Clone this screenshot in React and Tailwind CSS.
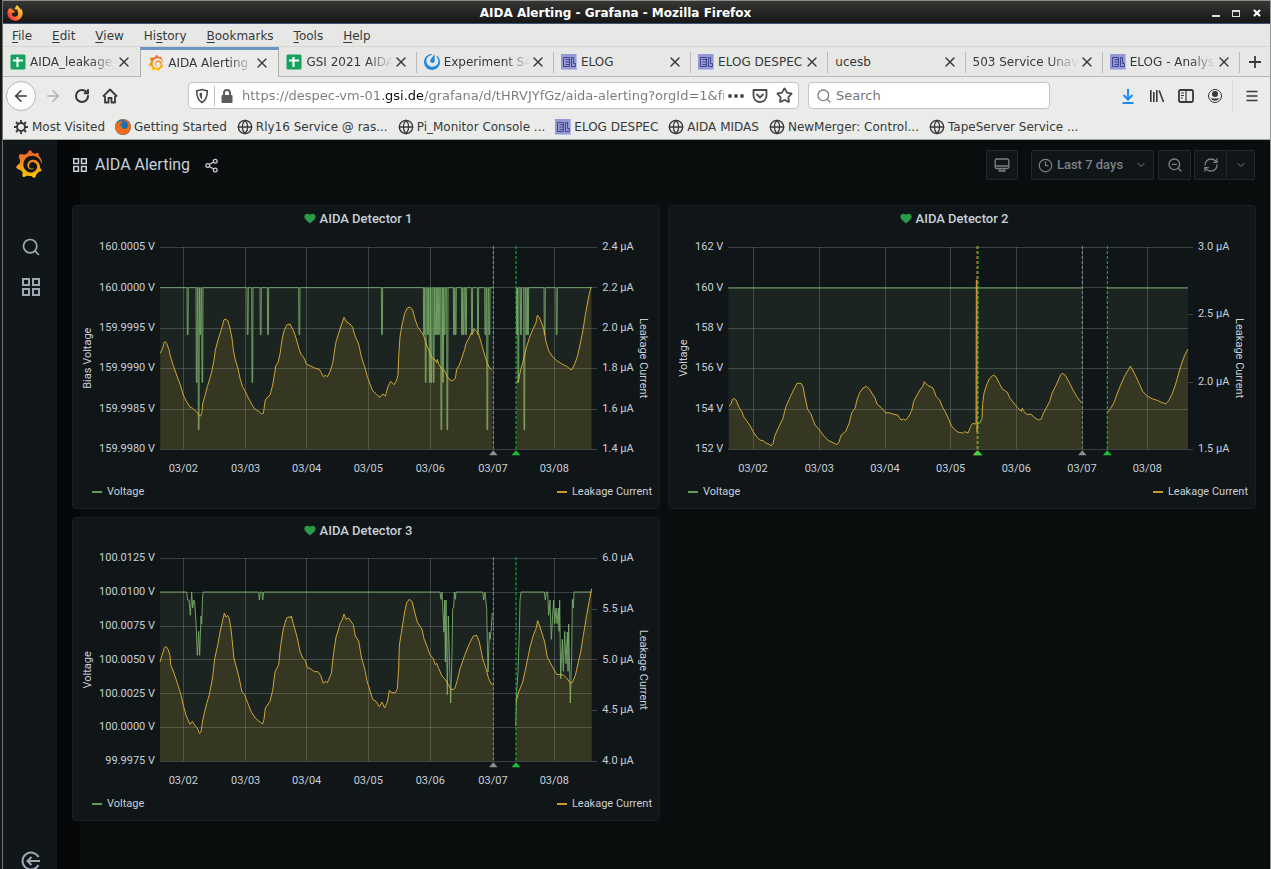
import React from "react";
import {
    ArrowLeft,
    ArrowRight,
    ChevronDown,
    Clock3,
    Globe,
    RefreshCw,
    RotateCw,
    Search,
    Share2,
    Star,
    X,
    ZoomOut,
} from "lucide-react";
import { FaFirefoxBrowser, FaFirefox } from "react-icons/fa";
import { SiGrafana, SiMattermost } from "react-icons/si";

// Traces are stored at three units per pixel
const UNIT = 3;

const shift = (dx, text) =>
    text
        .trim()
        .split(/\s+/)
        .map((pair) => {
            const [x, y] = pair.split(",").map(Number);
            return [x + dx, y];
        });

const spikes = (base, start, end, list) => {
    const points = [[start, base]];
    list.forEach(([x, y]) => points.push([x - 2, base], [x - 1, y], [x + 1, y], [x + 2, base]));
    points.push([end, base]);
    return points;
};

const LOW = 404;
const MID = 547;
const DEEP = 689;

const detector1 = {
    title: "AIDA Detector 1",
    inset: 2,
    plot: { left: 270, right: 1567, top: 141, bottom: 748 },
    leftTitle: "Bias Voltage",
    leftTicks: [
        [141, "160.0005 V"],
        [263, "160.0000 V"],
        [384, "159.9995 V"],
        [505, "159.9990 V"],
        [627, "159.9985 V"],
        [748, "159.9980 V"],
    ],
    rightTicks: [
        [141, "2.4 µA"],
        [263, "2.2 µA"],
        [384, "2.0 µA"],
        [505, "1.8 µA"],
        [627, "1.6 µA"],
        [748, "1.4 µA"],
    ],
    days: [340, 527, 710, 895, 1081, 1269, 1453],
    voltage: [
        spikes(263, 270, 1267, [
            [353, LOW], [380, MID], [386, DEEP], [391, LOW], [397, MID], [533, LOW], [547, MID], [572, LOW],
            [594, LOW], [688, LOW], [936, LOW], [1062, LOW], [1067, MID], [1074, LOW], [1079, MID], [1084, MID],
            [1091, MID], [1096, LOW], [1101, LOW], [1107, LOW], [1114, DEEP], [1119, MID], [1124, LOW],
            [1132, DEEP], [1152, LOW], [1157, LOW], [1176, LOW], [1181, LOW], [1188, LOW], [1206, LOW],
            [1224, LOW], [1246, LOW], [1252, DEEP], [1258, LOW],
        ]),
        spikes(263, 1338, 1565, [
            [1341, LOW], [1345, MID], [1353, LOW], [1363, DEEP], [1369, LOW], [1374, LOW], [1424, LOW], [1460, LOW],
        ]),
    ],
    current: [
        [
            ...shift(0, `271,460 278,445 282,428 286,425 290,430 298,452 300,465 310,497 320,525 330,552 340,585 350,605
                360,621 368,625 378,634 384,640 388,648 392,648 396,635 398,612 404,590 412,560 424,520 432,480 436,450
                444,420 452,395 458,375 462,359 468,358 474,363 480,385 486,415 490,450 496,480 504,505 510,535 518,560
                526,575 534,592 544,610 552,624 560,631 568,635 575,642 580,640 586,600 592,592 600,585 608,555 614,520
                617,498 624,488 630,462 636,420 642,393 650,375 660,372 666,384 672,396 680,420 688,450 694,464 702,474
                710,493 720,497 734,504 748,508 754,518 760,530 766,526 772,530 780,515 788,490 794,450 798,425 806,400
                814,375 822,352 830,366 840,372 848,382 854,405 866,432 874,470 884,500 892,530`),
            ...shift(900, `0,552 8,572 20,584 30,592 38,582 46,588 54,560 62,544 72,554 80,540 84,525 86,470 90,410 96,375
                104,340 112,324 120,321 128,330 136,360 144,382 156,398 162,410 170,435 180,460 188,476 196,480 200,488
                202,478 206,492 214,505 224,512 232,530 240,540 248,542 256,535 260,508 268,495 276,472 284,448 288,430
                298,412 304,398 308,400 312,386 320,395 326,402 334,430 344,465 352,490 360,505 367,510`),
        ],
        shift(900, `440,550 446,538 452,510 460,480 470,440 480,408 490,385 498,368 502,346 508,352 516,372 522,390
            528,425 536,452 546,468 560,482 576,492 592,500 600,508 606,508 614,492 622,470 630,435 638,395 646,345
            654,300 660,272 664,261`),
    ],
    marks: [[1270, "#8e8e8e"], [1338, "#12c435"]],
};

const detector2 = {
    title: "AIDA Detector 2",
    inset: 3,
    plot: { left: 190, right: 1569, top: 141, bottom: 748 },
    leftTitle: "Voltage",
    leftTicks: [
        [141, "162 V"],
        [263, "160 V"],
        [384, "158 V"],
        [505, "156 V"],
        [627, "154 V"],
        [748, "152 V"],
    ],
    rightTicks: [
        [141, "3.0 µA"],
        [343, "2.5 µA"],
        [546, "2.0 µA"],
        [748, "1.5 µA"],
    ],
    days: [264, 463, 660, 857, 1054, 1251, 1447],
    voltage: [
        [[190, 264], [1250, 264]],
        [[1325, 264], [1569, 264]],
    ],
    current: [
        [
            ...shift(0, `192,618 198,612 202,598 208,595 214,602 222,622 230,634 236,650 246,664 256,678 264,694 274,709
                284,720 294,722 304,730 312,732 318,738 324,730 330,706 340,684 354,655 362,622 376,590 388,565 396,550
                408,550 414,560 420,592 428,628 438,642 450,675 464,690 474,705 488,720 504,728 516,734 522,726 528,706
                542,694 553,668 560,638 570,625 576,600 584,578 594,564 604,559 614,568 622,582 630,594 636,612 650,624
                662,638 676,639 686,643 698,645 708,660 716,657 722,661 732,648 740,632 746,605 756,585 766,568 774,558
                778,545 788,556 804,564 814,590 824,600 832,620 842,638 850,655 858,675 868,688 880,697`),
            ...shift(885, `0,697 8,700 14,695 24,699 32,680 38,670 46,672 48,672 49,240 51,240 51,695 53,672 60,668 66,655
                68,610 72,580 80,555 88,536 100,525 108,530 118,550 126,566 142,577 150,595 164,612 172,622 184,634
                187,625 190,632 200,643 214,643 222,652 236,660 244,657 250,640 262,618 270,602 276,580 290,552 302,524
                308,520 316,526 326,544 340,572 352,592 364,608`),
        ],
        shift(885, `442,638 452,625 462,608 472,580 482,555 494,528 506,508 511,498 518,510 528,530 540,556 548,574
            560,587 576,596 592,601 606,608 618,611 626,602 636,583 646,555 656,520 664,493 674,466 684,447`),
    ],
    marks: [[936, "#e0752d"], [939, "#2fdc3f"], [1252, "#8e8e8e"], [1327, "#12c435"]],
};

const detector3 = {
    title: "AIDA Detector 3",
    inset: 2,
    plot: { left: 270, right: 1567, top: 139, bottom: 748 },
    leftTitle: "Voltage",
    leftTicks: [
        [139, "100.0125 V"],
        [240, "100.0100 V"],
        [342, "100.0075 V"],
        [443, "100.0050 V"],
        [545, "100.0025 V"],
        [646, "100.0000 V"],
        [748, "99.9975 V"],
    ],
    rightTicks: [
        [139, "6.0 µA"],
        [291, "5.5 µA"],
        [443, "5.0 µA"],
        [595, "4.5 µA"],
        [748, "4.0 µA"],
    ],
    days: [340, 527, 710, 895, 1081, 1269, 1453],
    voltage: [
        [
            ...shift(0, `270,240 350,240 353,264 357,264 361,310 365,240 368,288 371,264 374,270 378,330 382,430 386,358
                389,430 393,312 395,335 398,250 400,240 566,240 568,264 571,240 576,240 578,264 581,240`),
            ...shift(900, `210,240 213,262 216,240 222,360 224,264 226,450 228,264 232,548 235,312 238,420 242,573 246,420
                248,290 251,288 253,240 256,262 258,240 338,240 341,264 345,240 350,290 354,480 358,360 360,382 363,358
                367,302`),
        ],
        shift(900, `437,642 440,540 444,478 448,360 450,264 453,240 523,240 526,264 529,240 533,240 536,310 540,264
            544,382 548,310 551,264 554,335 558,288 561,335 565,288 567,358 569,264 572,500 577,382 580,478 584,358
            588,455 592,360 594,478 596,336 601,573 605,430 607,262 610,288 612,240 665,240`),
    ],
    current: [
        [
            ...shift(0, `270,450 276,430 283,407 289,404 294,412 300,430 302,458 312,483 322,513 332,545 340,580 348,610
                360,637 367,628 376,642 382,648 388,664 393,660 398,625 410,575 418,548 428,495 434,440 444,395 450,360
                458,325 463,303 468,315 473,310 478,320 484,360 492,440 500,468 508,500 516,540 524,548 534,575 544,600
                556,618 566,627 578,636 582,622 586,588 600,568 608,535 615,480 626,458 632,400 640,350 650,318 656,314
                660,318 664,312 670,335 682,378 690,418 698,438 706,445 712,467 722,470 732,479 744,479 752,490 760,514
                765,508 772,512 784,485 790,430 798,375 804,357 810,335 817,322 822,306 828,322 836,318 844,330 850,338
                856,372 866,387 874,435 884,470 892,510`),
            ...shift(900, `0,535 8,562 18,568 28,584 36,570 44,588 52,570 58,535 66,542 76,542 82,530 86,470 88,400 96,350
                104,300 110,272 118,262 126,268 134,300 142,330 156,352 162,380 172,405 180,428 190,440 196,458 200,454
                206,469 216,492 228,505 236,520 246,534 254,530 262,505 270,470 284,430 298,395 310,372 320,370 328,390
                338,440 348,470 356,500 364,516 369,517`),
        ],
        shift(900, `438,570 446,540 458,510 468,465 480,405 490,370 498,350 503,326 510,345 518,370 524,390 532,435
            546,462 560,487 580,489 590,498 602,514 608,510 616,490 624,455 632,420 640,370 650,310 658,265 665,230`),
    ],
    marks: [[1270, "#8e8e8e"], [1338, "#12c435"]],
};

const toLine = (points) => "M" + points.map((p) => p.join(" ")).join("L");

const toArea = (points, bottom) =>
    `${toLine(points)}L${points[points.length - 1][0]} ${bottom}L${points[0][0]} ${bottom}Z`;

const Series = ({ runs, bottom, color, fillOpacity, lineOpacity }) =>
    runs.map((points, i) => (
        <g key={i}>
            <path d={toArea(points, bottom)} fill={color} fillOpacity={fillOpacity} />
            <path
                d={toLine(points)}
                fill="none"
                stroke={color}
                strokeOpacity={lineOpacity}
                strokeLinejoin="round"
                vectorEffect="non-scaling-stroke"
            />
        </g>
    ));

const Chart = ({ inset, plot, leftTitle, leftTicks, rightTicks, days, voltage, current, marks }) => {
    const px = (x) => x / UNIT - inset;
    const py = (y) => y / UNIT - 5;
    const middle = py((plot.top + plot.bottom) / 2);

    return (
        <svg viewBox="1 28 586 245" className="block w-full h-auto font-[Roboto,sans-serif] text-[11px]" fill="#c7d0d9">
            <g transform={`translate(${-inset} -5) scale(${1 / UNIT})`}>
                <g stroke="#e6f0f5" strokeOpacity="0.2" shapeRendering="crispEdges">
                    {leftTicks.map(([y]) => (
                        <path key={y} d={`M${plot.left} ${y}H${plot.right}`} vectorEffect="non-scaling-stroke" />
                    ))}
                    {rightTicks.map(([y]) => (
                        <path key={y} d={`M${plot.right} ${y}h15`} vectorEffect="non-scaling-stroke" />
                    ))}
                    {days.map((x) => (
                        <path key={x} d={`M${x} ${plot.top}V${plot.bottom}`} vectorEffect="non-scaling-stroke" />
                    ))}
                </g>
                <Series runs={voltage} bottom={plot.bottom} color="#7eb26d" fillOpacity="0.1" lineOpacity="0.85" />
                <Series runs={current} bottom={plot.bottom} color="#eab839" fillOpacity="0.13" lineOpacity="0.85" />
                {marks.map(([x, color]) => (
                    <g key={x}>
                        <path
                            d={`M${x} ${plot.top - 3}V${plot.bottom}`}
                            stroke={color}
                            strokeDasharray="3 2"
                            vectorEffect="non-scaling-stroke"
                        />
                        <path d={`M${x} 751l13 15h-26z`} fill={color} />
                    </g>
                ))}
            </g>
            {leftTicks.map(([y, label]) => (
                <text key={label} x={px(plot.left) - 5} y={py(y) + 3} textAnchor="end">{label}</text>
            ))}
            {rightTicks.map(([y, label]) => (
                <text key={label} x={px(plot.right) + 10} y={py(y) + 3}>{label}</text>
            ))}
            {days.map((x, i) => (
                <text key={x} x={px(x)} y="267" textAnchor="middle">{`03/0${i + 2}`}</text>
            ))}
            <text transform={`translate(19 ${middle + 10}) rotate(-90)`} textAnchor="middle">{leftTitle}</text>
            <text transform={`translate(568 ${middle + 10}) rotate(90)`} textAnchor="middle">Leakage Current</text>
        </svg>
    );
};

const Panel = ({ data }) => (
    <section className="bg-[#101518] border border-[#1c1d22] rounded-sm font-[Roboto,sans-serif] text-[#c7d0d9]">
        <h2 className="h-[27px] pr-4 pb-0.5 flex items-center justify-center gap-1 text-[13px] font-medium">
            <svg viewBox="0 0 12 11" className="w-3 h-[11px]" fill="#299c46">
                <path d="M6 10.5 1.3 6.2C-.3 4.5.2 1.6 2.2.9 3.7.4 5.2.8 6 2 6.8.8 8.3.4 9.8.9c2 .7 2.5 3.6.9 5.3z" />
            </svg>
            {data.title}
        </h2>
        <Chart {...data} />
        <div className="h-[30px] pl-[19px] pr-[7px] pb-0.5 flex items-center justify-between text-[11px]">
            <button className="flex items-center gap-[5px]">
                <span className="w-[10px] h-[2px] bg-[#629e51]" />
                Voltage
            </button>
            <button className="flex items-center gap-[5px]">
                <span className="w-[10px] h-[2px] bg-[#c99b2a]" />
                Leakage Current
            </button>
        </div>
    </section>
);

const SheetIcon = () => (
    <svg viewBox="0 0 16 16" className="w-4 h-4 shrink-0">
        <rect x="0.5" y="0.5" width="15" height="15" rx="1.5" fill="#16a15f" />
        <path d="M3 6.500h10M7.500 3v10" stroke="#fff" strokeWidth="2" />
    </svg>
);

const ElogIcon = () => (
    <svg viewBox="0 0 16 16" className="w-4 h-4 shrink-0">
        <rect width="16" height="16" fill="#9499d2" />
        <path d="M0 15.500h16M15.500 0v16" stroke="#b9bdea" />
        <path d="M2.500 3.500h6v9h-6zM4.500 5.500H8M4.500 8H8M4.500 10.500H8M10.500 3.500h2v6h2v3h-4z" fill="none" stroke="#434894" />
    </svg>
);

const GrafanaIcon = ({ className }) => (
    <>
        <svg className="w-0 h-0 absolute">
            <defs>
                <linearGradient id="grafana" x1="0" y1="0" x2="0" y2="1">
                    <stop offset="0" stopColor="#f05a28" />
                    <stop offset="1" stopColor="#fbca0a" />
                </linearGradient>
                <linearGradient id="fox" x1="1" y1="0" x2="0" y2="1">
                    <stop offset="0.1" stopColor="#ffe14a" />
                    <stop offset="0.5" stopColor="#ff8a1e" />
                    <stop offset="0.9" stopColor="#f0245e" />
                </linearGradient>
            </defs>
        </svg>
        <SiGrafana className={className} style={{ fill: "url(#grafana)" }} />
    </>
);

const GridIcon = ({ className }) => (
    <svg viewBox="0 0 18 18" className={className} fill="none" stroke="currentColor" strokeWidth="2">
        <path d="M1 1h6v6H1zM11 1h6v6h-6zM1 11h6v6H1zM11 11h6v6h-6z" />
    </svg>
);

const GearIcon = () => (
    <svg viewBox="0 0 16 16" className="w-4 h-4 shrink-0" fill="none" stroke="currentColor">
        <circle cx="8" cy="8" r="4" strokeWidth="2" />
        <path
            d="M8 1v2.500M8 12.500V15M1 8h2.500M12.500 8H15M3 3l2 2M11 11l2 2M13 3l-2 2M5 11l-2 2"
            strokeWidth="1.8"
        />
    </svg>
);

const menus = ["File", "Edit", "View", "History", "Bookmarks", "Tools", "Help"];
const menuKeys = [0, 0, 0, 2, 0, 0, 0];

const tabs = [
    { label: "AIDA_leakage_", icon: <SheetIcon />, fade: true },
    { label: "AIDA Alerting", icon: <GrafanaIcon className="w-4 h-4 shrink-0" />, fade: true, active: true },
    { label: "GSI 2021 AIDA", icon: <SheetIcon />, fade: true },
    { label: "Experiment S4", icon: <SiMattermost className="w-4 h-4 shrink-0 text-[#2389d7]" />, fade: true },
    { label: "ELOG", icon: <ElogIcon /> },
    { label: "ELOG DESPEC", icon: <ElogIcon /> },
    { label: "ucesb" },
    { label: "503 Service Unava", fade: true },
    { label: "ELOG - Analys", icon: <ElogIcon />, fade: true },
];

const globe = <Globe className="w-4 h-4 shrink-0" />;

const bookmarks = [
    { label: "Most Visited", icon: <GearIcon /> },
    {
        label: "Getting Started",
        icon: (
            <span className="w-4 h-4 shrink-0 rounded-full bg-[#1c6fb5] grid place-items-center">
                <FaFirefox className="w-4 h-4 text-[#ef6c1a]" />
            </span>
        ),
    },
    { label: "Rly16 Service @ ras...", icon: globe },
    { label: "Pi_Monitor Console ...", icon: globe },
    { label: "ELOG DESPEC", icon: <ElogIcon /> },
    { label: "AIDA MIDAS", icon: globe },
    { label: "NewMerger: Control...", icon: globe },
    { label: "TapeServer Service ...", icon: globe },
];

const Browser = () => (
    <header className="font-['DejaVu_Sans',sans-serif] text-xs text-[#36393a]">
        {/* Title bar */}
        <div className="h-6 pt-0.5 flex items-center border-t border-[#8c8f8a] border-b border-b-[#3d5678] bg-linear-to-b from-[#373735] to-[#151615] text-white">
            <FaFirefoxBrowser className="w-4 h-4 ml-1 shrink-0" style={{ fill: "url(#fox)" }} />
            <div className="flex-1 pr-1 text-center font-bold">AIDA Alerting - Grafana - Mozilla Firefox</div>
            <div className="flex items-center gap-3 pr-2">
                <button aria-label="Minimize" className="w-2 h-2 border-b-2 border-[#dcdcdc]" />
                <button aria-label="Maximize" className="w-2 h-[7px] border border-t-2 border-[#dcdcdc]" />
                <button aria-label="Close"><X className="w-[10px] h-[10px]" strokeWidth={5} /></button>
            </div>
        </div>

        {/* Menu */}
        <nav className="h-[23px] px-[9px] pt-0.5 flex items-center gap-5 bg-[#e7e8e6] border-b border-[#d6d7d5]">
            {menus.map((menu, i) => (
                <button key={menu}>
                    {menu.slice(0, menuKeys[i])}
                    <u className="underline-offset-2">{menu[menuKeys[i]]}</u>
                    {menu.slice(menuKeys[i] + 1)}
                </button>
            ))}
        </nav>

        {/* Tabs */}
        <div className="h-[30px] flex bg-[#e7e8e6]">
            {tabs.map((tab, i) => (
                <div
                    key={i}
                    className={
                        tab.active
                            ? "flex-1 min-w-0 flex items-center gap-1 pl-[7px] pr-2 border-t-3 border-x border-t-[#6a94c2] border-x-[#a9adab] bg-[#ebecea] pb-0.5"
                            : "relative flex-1 min-w-0 flex items-center gap-1 pl-[7px] pr-2 border-b border-[#b4b7b4]"
                    }
                >
                    {tab.icon}
                    <button
                        className={
                            tab.fade
                                ? "flex-1 min-w-0 overflow-hidden whitespace-nowrap text-left [mask-image:linear-gradient(to_right,black_70%,transparent)]"
                                : "flex-1 min-w-0 whitespace-nowrap text-left"
                        }
                    >
                        {tab.label}
                    </button>
                    <button aria-label="Close tab" className="-ml-1"><X className="w-4 h-4" strokeWidth={2} /></button>
                    {i > 1 && <span className="absolute right-0 top-[5px] h-[21px] w-px bg-[#b9bcba]" />}
                </div>
            ))}
            <button aria-label="New tab" className="w-[30px] grid place-items-center border-b border-[#b4b7b4]">
                <svg viewBox="0 0 14 14" className="w-[14px] h-[14px]" stroke="currentColor" strokeWidth="1.8">
                    <path d="M7 1v12M1 7h12" />
                </svg>
            </button>
        </div>

        {/* Address bar */}
        <div className="h-[37px] flex items-center bg-[#ebecea] text-[13px]">
            <div className="w-[185px] pl-[3px] flex items-center gap-3">
                <button aria-label="Back" className="w-[30px] h-[30px] rounded-full border border-[#b4b6b4] bg-[#fcfcfc] grid place-items-center">
                    <ArrowLeft className="w-[18px] h-[18px]" />
                </button>
                <button aria-label="Forward" className="-ml-1"><ArrowRight className="w-[18px] h-[18px] text-[#b1b3b3]" /></button>
                <button aria-label="Reload"><RotateCw className="w-4 h-4" strokeWidth={3} /></button>
                <button aria-label="Home">
                    <svg viewBox="0 0 16 16" className="w-4 h-4" fill="none" stroke="currentColor" strokeWidth="1.8" strokeLinejoin="round">
                        <path d="M1 8.500 8 1.500l7 7M3 8v6.500h3.500V10h3v4.500H13V8" />
                    </svg>
                </button>
            </div>
            <div className="flex-1 min-w-0 h-[27px] px-[5px] flex items-center bg-white border border-[#c3c5c3] rounded-sm">
                <svg viewBox="0 0 16 16" className="w-4 h-4 shrink-0" fill="none" stroke="#4b4f50" strokeWidth="1.6">
                    <path d="M8 1.500c2 .8 3.500 1 5.300 1.200 0 5.300-.8 9.300-5.300 11.800-4.500-2.500-5.300-6.500-5.300-11.800C4.500 2.500 6 2.300 8 1.500z" />
                    <path d="M8 4.500v7C5.800 9.500 5.500 7.500 5.500 5.200z" fill="#4b4f50" stroke="none" />
                </svg>
                <span className="w-px h-5 mx-1 bg-[#bfc1bf]" />
                <svg viewBox="0 0 16 16" className="w-4 h-4 shrink-0" fill="#5a5c5d">
                    <rect x="2.5" y="7" width="11" height="8" rx="1" />
                    <path d="M5 7V5a3 3 0 0 1 6 0v2" fill="none" stroke="#5a5c5d" strokeWidth="2" />
                </svg>
                <input
                    aria-label="Address"
                    readOnly
                    className="flex-1 min-w-0 ml-[7px] outline-none text-transparent bg-clip-text bg-[linear-gradient(90deg,#7a7a7a_141px,#0c0c0d_141px,#0c0c0d_181px,#7a7a7a_181px)]"
                    value="https://despec-vm-01.gsi.de/grafana/d/tHRVJYfGz/aida-alerting?orgId=1&fro"
                />
                <div className="flex items-center gap-2 pl-1 pr-0 text-[#4b4f50]">
                    <svg viewBox="0 0 16 4" className="w-4 h-1" fill="currentColor">
                        <circle cx="2" cy="2" r="2" />
                        <circle cx="8" cy="2" r="2" />
                        <circle cx="14" cy="2" r="2" />
                    </svg>
                    <svg viewBox="0 0 16 16" className="w-4 h-4" fill="none" stroke="currentColor" strokeWidth="1.8" strokeLinejoin="round" strokeLinecap="round">
                        <path d="M1.500 2h13v5.500a6.500 6.500 0 0 1-13 0zM5 6.500l3 3 3-3" />
                    </svg>
                    <Star className="w-[17px] h-[17px]" strokeWidth={2.5} />
                </div>
            </div>
            <label className="w-[242px] h-[27px] ml-[9px] pl-[7px] flex items-center gap-1 bg-white border border-[#c3c5c3] rounded-sm">
                <Search className="w-4 h-4 text-[#7c7f80]" />
                <input aria-label="Search" placeholder="Search" className="min-w-0 flex-1 outline-none placeholder:text-[#767676]" />
            </label>
            <div className="w-[220px] pr-[10px] flex items-center justify-end gap-[13px]">
                <button aria-label="Downloads">
                    <svg viewBox="0 0 16 16" className="w-4 h-4" fill="none" stroke="#1b8cf5" strokeWidth="2">
                        <path d="M8 1v10M3.500 7 8 11.500 12.500 7M2.500 15h11" />
                    </svg>
                </button>
                <button aria-label="Library">
                    <svg viewBox="0 0 16 16" className="w-4 h-4" fill="none" stroke="currentColor" strokeWidth="1.6">
                        <path d="M1.800 2v12M4.800 4v10M7.800 2v12M10.200 2.500 14.500 14" />
                    </svg>
                </button>
                <button aria-label="Sidebars">
                    <svg viewBox="0 0 16 16" className="w-4 h-4" fill="none" stroke="currentColor" strokeWidth="1.8">
                        <rect x="1" y="2" width="14" height="12" rx="1.5" />
                        <path d="M8 2v12M3 5h3M3 7.500h3M3 10h2" strokeWidth="1.2" />
                    </svg>
                </button>
                <button aria-label="Account">
                    <svg viewBox="0 0 16 16" className="w-4 h-4" fill="currentColor">
                        <circle cx="8" cy="8" r="6.5" fill="none" stroke="currentColor" />
                        <circle cx="8" cy="6" r="3" />
                        <path d="M3.500 10c3 .8 6 .8 9 0a5 5 0 0 1-9 0z" />
                    </svg>
                </button>
                <span className="w-px h-[30px] -ml-1 -mr-0.5 bg-[#d8d9d7]" />
                <button aria-label="Menu">
                    <svg viewBox="0 0 16 16" className="w-4 h-4" stroke="currentColor" strokeWidth="1.6">
                        <path d="M2.500 3.500h11M2.500 8h11M2.500 12.500h11" />
                    </svg>
                </button>
            </div>
        </div>

        {/* Bookmarks */}
        <nav className="h-[26px] pl-[10px] flex items-center gap-[10px] bg-[#ebecea] border-b border-[#a3a6a3] whitespace-nowrap overflow-hidden">
            {bookmarks.map((bookmark) => (
                <a key={bookmark.label} href="#" className="flex items-center gap-[3px]">
                    {bookmark.icon}
                    {bookmark.label}
                </a>
            ))}
        </nav>
    </header>
);

const toolButton = "h-[30px] flex items-center justify-center bg-[#101518] border border-[#2a252b] rounded-xs";

const App = () => {
    return (
        <div className="h-screen overflow-hidden bg-[#090d0e] border-l-2 border-l-[#161817] border-r border-r-[#8f9a94]">
            <div className="h-full flex flex-col border-l border-[#6f7673]">
                <Browser />
                <div className="flex-1 min-h-0 flex text-[#c7d0d9]">
                    <aside className="w-[55px] pl-0.5 shrink-0 flex flex-col items-center bg-[#111719] border-r border-[#050707] text-[#9fa7b3]">
                        <a href="#" aria-label="Home" className="mt-[10px] mr-1"><GrafanaIcon className="w-7 h-7" /></a>
                        <button aria-label="Search" className="mt-[59px]"><Search className="w-5 h-5" strokeWidth={2} /></button>
                        <button aria-label="Dashboards" className="mt-[21px]"><GridIcon className="w-[18px] h-[18px]" /></button>
                        <button aria-label="Sign in" className="mt-auto -mb-0.5">
                            <svg viewBox="0 0 20 20" className="w-5 h-5" fill="none" stroke="currentColor" strokeWidth="2">
                                <path d="M17.500 6a8.500 8.500 0 1 0 0 8M19 10H7M10.500 6 6.500 10l4 4" />
                            </svg>
                        </button>
                    </aside>

                    <main className="flex-1 min-w-0 px-[14px] bg-[linear-gradient(90deg,#060708_22px,#090d0e_22px)]">
                        <div className="h-[50px] flex items-center font-[Roboto,sans-serif]">
                            <GridIcon className="w-[14px] h-[14px] ml-px" />
                            <h1 className="ml-2 text-base">AIDA Alerting</h1>
                            <button aria-label="Share" className="ml-[14px]"><Share2 className="w-[15px] h-[15px]" /></button>
                            <div className="ml-auto mr-px flex items-center text-[13px] font-medium text-[#7b8087]">
                                <button aria-label="Cycle view" className={`${toolButton} w-8 mr-[13px]`}>
                                    <svg viewBox="0 0 16 16" className="w-4 h-4" fill="none" stroke="currentColor" strokeWidth="1.3">
                                        <rect x="1.2" y="2" width="13.6" height="9.5" rx="1.5" />
                                        <path d="M1.200 9h13.600M6 11.500V14M10 11.500V14M4.500 14h7" />
                                    </svg>
                                </button>
                                <button className={`${toolButton} w-[123px] mr-1`}>
                                    <Clock3 className="w-[15px] h-[15px] mr-1" />
                                    Last 7 days
                                    <ChevronDown className="w-3 h-3 ml-3" />
                                </button>
                                <button aria-label="Zoom out" className={`${toolButton} w-[33px] mr-[3px]`}><ZoomOut className="w-4 h-4" /></button>
                                <button aria-label="Refresh" className={`${toolButton} w-[33px]`}><RefreshCw className="w-4 h-4" /></button>
                                <button aria-label="Refresh interval" className={`${toolButton} w-[29px] -ml-px`}><ChevronDown className="w-3 h-3" /></button>
                            </div>
                        </div>
                        <div className="mt-[15px] grid grid-cols-2 gap-2">
                            <Panel data={detector1} />
                            <Panel data={detector2} />
                            <Panel data={detector3} />
                        </div>
                    </main>
                </div>
            </div>
        </div>
    );
};

export default App;
